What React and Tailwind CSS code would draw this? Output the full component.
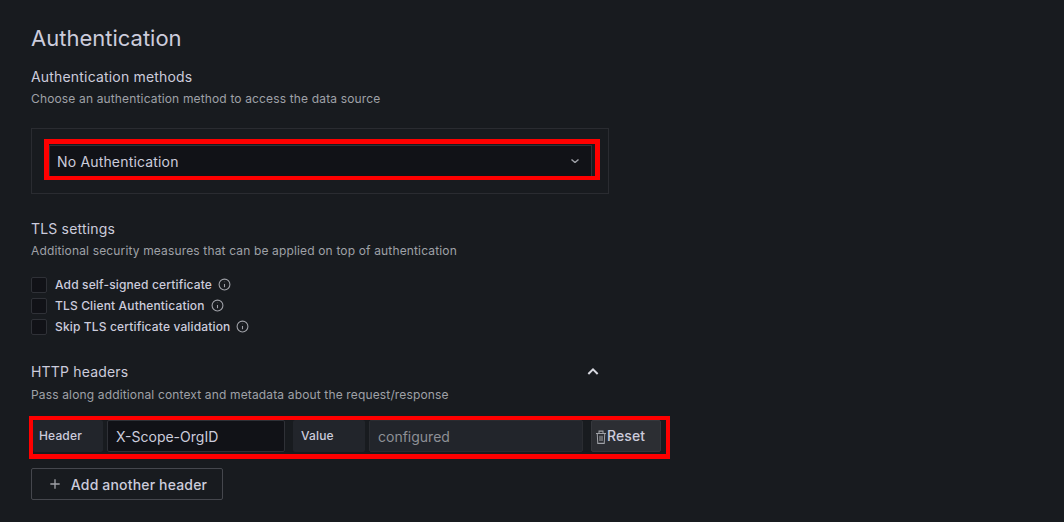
const F = { fontFamily: 'Inter, "Noto Sans", sans-serif' };

function Info({ className }) {
  return (
    <svg viewBox="0 0 24 24" className={`w-[13px] h-[13px] text-[#9fa1a7] ${className || ''}`} fill="none" stroke="currentColor" strokeWidth="2">
      <circle cx="12" cy="12" r="10" />
      <path d="M12 11v6" />
      <path d="M12 7v.5" strokeWidth="2.5" />
    </svg>
  );
}

function Check({ label }) {
  return (
    <div className="flex items-center h-[21px]">
      <div className="w-4 h-4 rounded-[2px] border border-[#2f3137] bg-[#111217]" />
      <span className="ml-2 text-[12px] leading-4 font-medium tracking-[0.15px] text-[#ccccdc]">{label}</span>
      <Info className="ml-[6px] -mt-[1px]" />
    </div>
  );
}

function Addon({ children, className }) {
  return (
    <div className={`h-8 flex items-center bg-[#22252b] rounded-[2px] text-[12px] font-medium tracking-[0.15px] text-[#ccccdc] ${className}`}>
      {children}
    </div>
  );
}

export default function App() {
  return (
    <div style={F} className="w-[1064px] h-[522px] overflow-hidden bg-[#181b1f] text-[#ccccdc] pl-[31px] pt-[24px]">
      <h2 className="text-[22px] leading-[28px] font-normal text-[#ccccdc]">Authentication</h2>
      <div className="mt-[15px] text-[14px] leading-[20px] tracking-[0.18px]">Authentication methods</div>
      <div className="mt-[3px] text-[12px] leading-[18px] tracking-[0.15px] text-[#9fa1a7]">Choose an authentication method to access the data source</div>

      <div className="mt-[20px] w-[578px] h-[66px] border border-[#2a2c31] pt-[10px] pl-[12px]">
        <div className="w-[556px] h-[41px] border-[5px] border-b-[4px] border-[#ff0000] pt-[1px]">
          <div className="w-[543px] h-full bg-[#111217] border border-[#2f3137] border-b-0 flex items-center justify-between pl-[7px] pr-[12px] text-[14px] tracking-[0.17px]">
            <span>No Authentication</span>
            <svg viewBox="0 0 8 4" className="w-[8px] h-[4px] text-[#9fa1a7]" fill="none" stroke="currentColor" strokeWidth="1.4">
              <path d="M0.5 0.5L4 3.5L7.5 0.5" />
            </svg>
          </div>
        </div>
      </div>

      <div className="mt-[25px] text-[14px] leading-[20px] tracking-[0.18px]">TLS settings</div>
      <div className="mt-[3px] text-[12px] leading-[18px] tracking-[0.15px] text-[#9fa1a7]">Additional security measures that can be applied on top of authentication</div>

      <div className="mt-[14px] flex flex-col">
        <Check label="Add self-signed certificate" />
        <Check label="TLS Client Authentication" />
        <Check label="Skip TLS certificate validation" />
      </div>

      <div className="mt-[25px] w-[570px] flex items-center justify-between">
        <span className="text-[14px] leading-[20px] tracking-[0.18px]">HTTP headers</span>
        <svg viewBox="0 0 24 24" className="w-4 h-4 text-[#d8d9e0]" fill="none" stroke="currentColor" strokeWidth="3">
          <path d="M5 15l7-7 7 7" />
        </svg>
      </div>
      <div className="mt-[4px] text-[12px] leading-[18px] tracking-[0.15px] text-[#9fa1a7]">Pass along additional context and metadata about the request/response</div>

      <div className="mt-[12px] -ml-[2px] w-[641px] h-[43px] border-[4px] border-b-[5px] border-[#ff0000] flex items-start text-[14px]">
        <Addon className="w-[70px] pl-[6px]">Header</Addon>
        <div className="ml-[4px] w-[178px] h-8 flex items-center px-2 bg-[#111217] border border-[#2f3137] rounded-[2px]">X-Scope-OrgID</div>
        <Addon className="ml-[8px] w-[72px] pl-[8px]">Value</Addon>
        <div className="ml-[4px] w-[214px] h-8 flex items-center px-2 bg-[#22252b] border border-[#2a2c31] rounded-[2px] text-[#8e9096]">configured</div>
        <div className="ml-[8px] w-[70px] h-8 flex items-center pl-[3px] bg-[#2c2e33] border border-[#35373c] rounded-[2px] text-[#ccccdc] font-medium tracking-[0.12px]">
          <svg viewBox="0 0 24 24" className="w-[12px] h-[14px] shrink-0 mt-[2px]" fill="none" stroke="#9fa1a7" strokeWidth="2" preserveAspectRatio="none">
            <path d="M2 6h20M8 6V2h8v4M4.5 6l1 17h13l1-17M10 10v9M14 10v9" />
          </svg>
          <span className="-mt-[1px]">Reset</span>
        </div>
      </div>

      <div className="mt-[9px] w-[192px] h-8 flex items-center justify-center gap-[8px] border border-[#45474d] rounded-[2px] text-[14px] font-medium tracking-[0.17px] text-[#ccccdc]">
        <svg viewBox="0 0 24 24" className="w-4 h-4 text-[#9fa1a7]" fill="none" stroke="currentColor" strokeWidth="2">
          <path d="M12 5v14M5 12h14" />
        </svg>
        <span>Add another header</span>
      </div>
    </div>
  );
}
